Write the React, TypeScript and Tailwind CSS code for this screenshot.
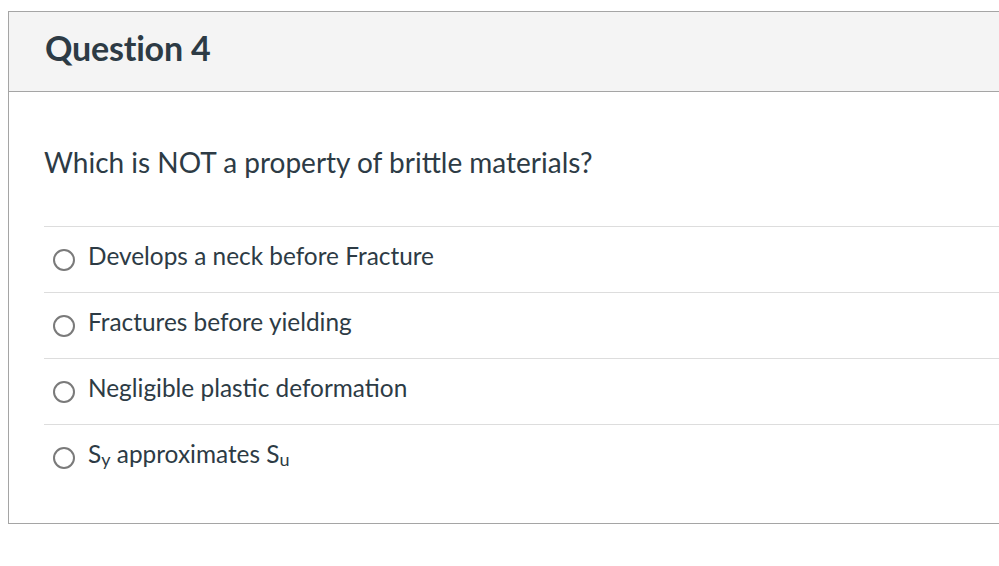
import React from "react";

const answers: React.ReactNode[] = [
  "Develops a neck before Fracture",
  "Fractures before yielding",
  "Negligible plastic deformation",
  <>
    S<sub className="text-[18px] relative top-[3px] align-baseline">y</sub> approximates S
    <sub className="text-[18px] relative top-[3px] align-baseline">u</sub>
  </>,
];

export default function App() {
  return (
    <div
      className="w-[999px] h-[566px] overflow-hidden bg-white text-[#2d3b45]"
      style={{ fontFamily: "Lato, 'Open Sans', sans-serif" }}
    >
      <div className="ml-[8px] mt-[11px] w-[1100px] border border-[#a5a5a5]">
        <div className="h-[80px] bg-[#f4f4f4] border-b border-[#a5a5a5] pl-[36px] pb-[7px] flex items-center">
          <h2 className="text-[34px] font-bold leading-none tracking-[-0.2px]">Question 4</h2>
        </div>
        <div className="pl-[35px] pb-[33px]">
          <div className="h-[134px] flex items-center pt-[5px]">
            <p className="text-[28px] leading-none">Which is NOT a property of brittle materials?</p>
          </div>
          {answers.map((a, i) => (
            <div key={i} className="h-[66px] border-t border-[#dddddd] flex items-center">
              <span className="ml-[9px] w-[22px] h-[22px] rounded-full border-2 border-[#7a7a7a] bg-white shrink-0" />
              <span className="ml-[13px] text-[24.4px] leading-none pb-[7px]">{a}</span>
            </div>
          ))}
        </div>
      </div>
    </div>
  );
}
